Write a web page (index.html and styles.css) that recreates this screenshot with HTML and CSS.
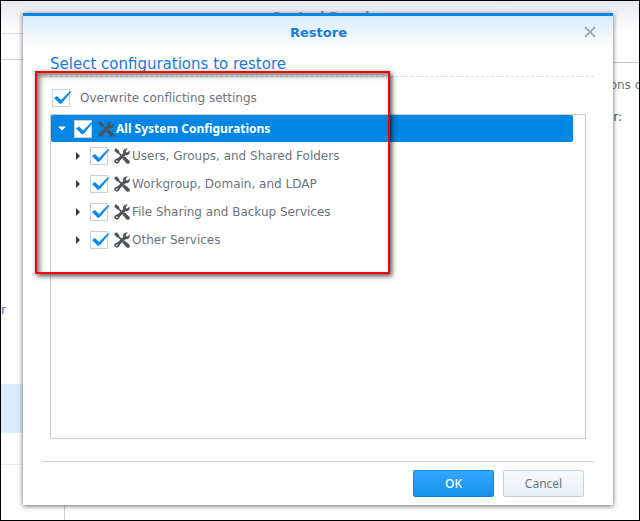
FILE: index.html
```html
<!DOCTYPE html>
<html lang="en">
<head>
    <meta charset="UTF-8">
    <meta name="viewport" content="width=device-width, initial-scale=1.0">
    <title>Restore</title>
    <link rel="stylesheet" href="styles.css">
</head>
<body>

    <!-- Shared icon: crossed screwdriver and wrench -->
    <svg class="sprite" aria-hidden="true">
        <symbol id="tools" viewBox="0 0 16 16">
            <path d="M1 0.8 L2.6 0.4 L5.2 3 L5.4 4.4 L9 8 L8 9.2 L4.2 5.6 L2.8 5.2 L0.4 2.4 Z"/>
            <path d="M9 9.4 L10.6 8.4 L15.4 12.8 Q16.4 14.2 15.2 15.4 Q14 16.2 12.6 15.4 L8.4 10.6 Z"/>
            <path d="M13.8 0.6 L11.8 2.8 L12 4.2 L13.4 4.6 L15.6 2.6 Q16.4 5.4 14.2 6.8 Q12.8 7.6 11.4 7.2 L6 12.6 Q5.4 15 3.4 15.4 Q1.2 16 0.2 13.8 Q0 11.6 2.2 10.8 L3.8 10.2 L9.2 5 Q8.6 3 10 1.6 Q11.6 0 13.8 0.6 Z M3 12.2 Q1.8 12.4 2 13.4 Q2.4 14.4 3.4 13.8 Q4 12.6 3 12.2 Z" fill-rule="evenodd"/>
        </symbol>
    </svg>

    <div class="desktop">
        <div class="window-title">Control Panel</div>
        <div class="sidebar">
            <div class="search"></div>
            <div class="nav-group">r</div>
            <div class="nav-item active"></div>
            <div class="nav-item"></div>
        </div>
        <div class="panel">
            <div class="tabs"></div>
            <p class="desc">ons o</p>
            <p class="desc owner">r:</p>
        </div>
    </div>

    <div class="dialog" role="dialog" aria-labelledby="dialog-title">
        <div class="dialog-header">
            <h1 id="dialog-title">Restore</h1>
            <button type="button" class="close" aria-label="Close">
                <svg viewBox="0 0 12 12"><path d="M1 1 L11 11 M11 1 L1 11"/></svg>
            </button>
        </div>

        <form class="dialog-body">
            <h2>Select configurations to restore</h2>

            <div class="option">
                <input type="checkbox" id="overwrite" checked>
                <label for="overwrite">Overwrite conflicting settings</label>
            </div>

            <ul class="tree">
                <li class="row selected">
                    <span class="arrow open"></span>
                    <input type="checkbox" id="all" checked>
                    <svg class="tools"><use href="#tools"/></svg>
                    <label for="all">All System Configurations</label>
                </li>
                <li class="row child">
                    <span class="arrow"></span>
                    <input type="checkbox" id="users" checked>
                    <svg class="tools"><use href="#tools"/></svg>
                    <label for="users">Users, Groups, and Shared Folders</label>
                </li>
                <li class="row child">
                    <span class="arrow"></span>
                    <input type="checkbox" id="workgroup" checked>
                    <svg class="tools"><use href="#tools"/></svg>
                    <label for="workgroup">Workgroup, Domain, and LDAP</label>
                </li>
                <li class="row child">
                    <span class="arrow"></span>
                    <input type="checkbox" id="sharing" checked>
                    <svg class="tools"><use href="#tools"/></svg>
                    <label for="sharing">File Sharing and Backup Services</label>
                </li>
                <li class="row child">
                    <span class="arrow"></span>
                    <input type="checkbox" id="other" checked>
                    <svg class="tools"><use href="#tools"/></svg>
                    <label for="other">Other Services</label>
                </li>
            </ul>

            <div class="actions">
                <button type="submit" class="btn primary">OK</button>
                <button type="button" class="btn">Cancel</button>
            </div>
        </form>

        <div class="highlight"></div>
    </div>

</body>
</html>
```

FILE: styles.css
```css
* { box-sizing: border-box; }
body {
    margin: 0;
    font-family: "DejaVu Sans", Verdana, sans-serif;
    font-size: 12px;
    color: #6a757e;
    position: relative;
}
.sprite {
    position: absolute;
    width: 0;
    height: 0;
}
h1, h2, p, ul { margin: 0; padding: 0; }

/* Control panel behind the dialog */
.desktop {
    min-height: 100vh;
    border: 1px solid #000;
    background: linear-gradient(#e8eaf1, #fff 32px);
    display: grid;
    grid-template-columns: 64px 1fr;
    grid-template-rows: 32px 1fr;
    overflow: hidden;
}
.window-title {
    grid-column: 1 / -1;
    text-align: center;
    font-size: 13px;
    font-weight: bold;
    line-height: 32px;
    color: #8b949d;
}
.sidebar {
    border-top: 1px solid #d5dae0;
    border-right: 1px solid #d0d3d6;
}
.search {
    height: 26px;
    border-bottom: 1px solid #c3cfdb;
}
.nav-group {
    height: 324px;
    padding-top: 242px;
    font-size: 12px;
    line-height: 16px;
    color: #2878b0;
}
.nav-item {
    height: 32px;
    border-bottom: 1px solid #e3eaf3;
}
.nav-item.active {
    height: 49px;
    background: #d9edff;
    border: none;
}
.panel { text-align: right; }
.tabs {
    height: 30px;
    border-bottom: 1px solid #c8c8c8;
}
.desc {
    margin-top: 12px;
    margin-right: -3px;
    line-height: 20px;
}
.desc.owner {
    padding-right: 20px;
    color: #33608a;
}

/* Dialog */
.dialog {
    position: absolute;
    top: 13px;
    right: 27px;
    bottom: 16px;
    left: 23px;
    display: flex;
    flex-direction: column;
    background: #fff;
    border-top: 3px solid #0086e5;
    box-shadow: 0 1px 5px rgba(0,0,0,0.6);
}
.dialog-header {
    display: flex;
    align-items: center;
    height: 32px;
    padding-right: 15px;
    background: linear-gradient(#d8ebfb, #fff);
}
h1 {
    flex: 1;
    padding-left: 32px;
    text-align: center;
    font-size: 13px;
    color: #157be0;
}
.close {
    width: 16px;
    height: 16px;
    padding: 2px;
    border: none;
    background: none;
    cursor: pointer;
}
.close svg {
    display: block;
    width: 12px;
    height: 12px;
    fill: none;
    stroke: #a3aeb7;
    stroke-width: 2;
}
.dialog-body {
    flex: 1;
    display: flex;
    flex-direction: column;
    padding: 4px 19px 8px;
}
h2 {
    margin-left: 8px;
    height: 25px;
    border-bottom: 1px dashed #d3dfea;
    font-size: 15px;
    font-weight: normal;
    line-height: 24px;
    color: #157be0;
}
.option {
    display: flex;
    align-items: center;
    gap: 10px;
    margin: 12px 0 7px 10px;
}
input[type="checkbox"] {
    appearance: none;
    position: relative;
    flex: none;
    width: 18px;
    height: 18px;
    margin: 0;
    border: 1px solid #c9d3df;
    background: #fff;
}
input[type="checkbox"]:checked::before {
    content: "";
    position: absolute;
    top: -1px;
    left: -1px;
    width: 20px;
    height: 18px;
    background: #0a8bf0;
    clip-path: polygon(2px 9px, 5px 7px, 9px 11px, 17px 3px, 20px 2px, 10px 14px, 8px 15px);
}
.tree {
    flex: 1;
    margin: 0 8px;
    border: 1px solid #c9ccd0;
    list-style: none;
}
.row {
    display: flex;
    align-items: center;
    height: 28px;
}
.row.child { padding-left: 16px; }
.row.selected {
    height: 27px;
    margin-right: 12px;
    border-radius: 2px;
    background: #0086e5;
    color: #fff;
}
.row.selected label {
    font-family: "Noto Sans", sans-serif;
    font-weight: bold;
}
.arrow {
    width: 23px;
    height: 8px;
    flex: none;
}
.arrow::before {
    content: "";
    display: block;
    width: 8px;
    height: 8px;
    margin-left: 7px;
    background: #2e3b47;
    clip-path: polygon(2px 0, 6px 4px, 2px 8px);
}
.arrow.open::before {
    background: #fff;
    clip-path: polygon(0 2px, 8px 2px, 4px 6px);
}
.tools {
    width: 16px;
    height: 16px;
    margin: 0 2px 0 6px;
    flex: none;
    fill: #4b535c;
}
.actions {
    display: flex;
    justify-content: flex-end;
    gap: 9px;
    margin-top: 22px;
    padding: 8px 10px 0 0;
    border-top: 1px solid #d5d5d5;
}
.btn {
    width: 81px;
    height: 27px;
    padding: 0;
    border: 1px solid #c5d1de;
    border-radius: 2px;
    background: linear-gradient(#f6fafd, #e9eff4);
    font-family: "Noto Sans", sans-serif;
    font-size: 12px;
    color: #6b767f;
    cursor: pointer;
}
.btn.primary {
    border-color: #0a84e0;
    background: linear-gradient(#34a8ff, #1591ea);
    color: #fff;
    font-weight: 500;
}

/* Red callout over the tree */
.highlight {
    position: absolute;
    top: 55px;
    left: 12px;
    width: 355px;
    height: 203px;
    border: 2px solid #f00;
    box-shadow: 2px 2px 5px rgba(0,0,0,0.7), inset 3px 3px 5px rgba(0,0,0,0.5);
    pointer-events: none;
}
```
